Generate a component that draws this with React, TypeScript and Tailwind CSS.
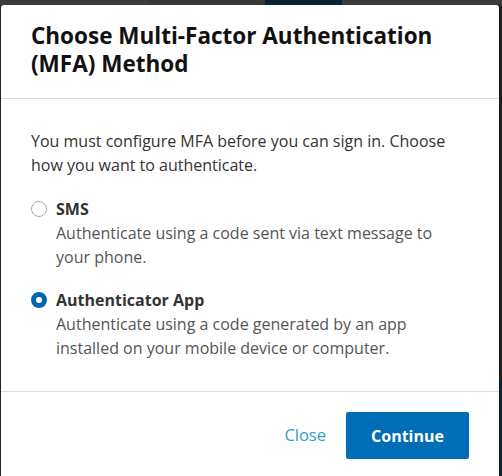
import React, { useState } from 'react';

type Method = 'sms' | 'app';

const methods: { id: Method; label: string; description: string }[] = [
  {
    id: 'sms',
    label: 'SMS',
    description: 'Authenticate using a code sent via text message to your phone.',
  },
  {
    id: 'app',
    label: 'Authenticator App',
    description: 'Authenticate using a code generated by an app installed on your mobile device or computer.',
  },
];

const Radio: React.FC<{ checked: boolean }> = ({ checked }) =>
  checked ? (
    <span className="mt-[4px] h-[16px] w-[16px] shrink-0 rounded-full border-[5px] border-[#0067b1] bg-white" />
  ) : (
    <span className="mt-[4px] h-[16px] w-[16px] shrink-0 rounded-full border border-[#a9a9a9] bg-white" />
  );

export default function App() {
  const [selected, setSelected] = useState<Method>('app');

  return (
    <div
      className="relative h-[476px] w-[502px] overflow-hidden bg-[#262626]"
      style={{ fontFamily: '"Open Sans", "Liberation Sans", sans-serif' }}
    >
      {/* page behind the backdrop */}
      <div className="absolute inset-x-0 top-0 flex h-[5px]">
        <div className="w-[148px] bg-[#3b3b3b]" />
        <div className="w-[117px] bg-[#363636]" />
        <div className="w-[77px] bg-[#0b2132]" />
        <div className="flex-1 bg-[#3a3a3a]" />
      </div>
      <div className="absolute right-0 top-[5px] bottom-0 w-[3px] bg-[#1f1f1f]" />
      <div className="absolute right-0 top-[380px] bottom-0 w-[3px] bg-[#0b2132]" />

      <div className="relative ml-[1px] mt-[5px] w-[498px] rounded-t-[3px] bg-white">
        <div className="border-b border-[#dddddd] px-[30px] pb-[20px] pt-[17px]">
          <h2 className="text-[22.5px] font-bold leading-[28px] text-[#111111]">
            Choose Multi-Factor Authentication (MFA) Method
          </h2>
        </div>

        <div className="px-[30px] pb-[31px] pt-[30px]">
          <p className="text-[16px] leading-[24px] text-[#333333]">
            You must configure MFA before you can sign in. Choose how you want to authenticate.
          </p>
          <div className="mt-[20px] flex flex-col gap-[19px]">
            {methods.map((m) => (
              <label
                key={m.id}
                className="flex cursor-pointer gap-[9px]"
                onClick={() => setSelected(m.id)}
              >
                <Radio checked={selected === m.id} />
                <span className="flex flex-col">
                  <span className="text-[16px] font-bold leading-[24px] text-[#333333]">{m.label}</span>
                  <span className="text-[16px] leading-[24px] text-[#555555]">{m.description}</span>
                </span>
              </label>
            ))}
          </div>
        </div>

        <div className="flex items-center justify-end gap-[20px] border-t border-[#dddddd] px-[30px] pb-[30px] pt-[20px]">
          <button className="text-[16.5px] text-[#2a9fd8]">Close</button>
          <button className="h-[47px] w-[123px] rounded-[2px] bg-[#006db7] text-[16px] font-bold text-white">
            Continue
          </button>
        </div>
      </div>
    </div>
  );
}
